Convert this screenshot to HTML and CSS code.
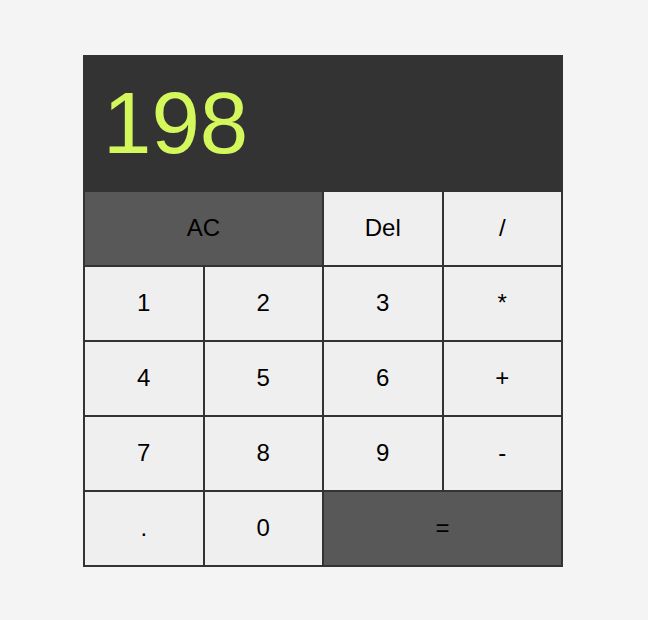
FILE: index.html
```html
<!DOCTYPE html>
<html>
<head>
<meta charset="utf-8">
<link rel="stylesheet" href="styles.css">
</head>
<body>
<div class="page">
  <div class="calc">
    <div class="display">198</div>
    <div class="keys">
      <button class="key dark span2">AC</button>
      <button class="key">Del</button>
      <button class="key">/</button>
      <button class="key">1</button>
      <button class="key">2</button>
      <button class="key">3</button>
      <button class="key">*</button>
      <button class="key">4</button>
      <button class="key">5</button>
      <button class="key">6</button>
      <button class="key">+</button>
      <button class="key">7</button>
      <button class="key">8</button>
      <button class="key">9</button>
      <button class="key">-</button>
      <button class="key">.</button>
      <button class="key">0</button>
      <button class="key dark span2">=</button>
    </div>
  </div>
</div>
</body>
</html>
```
FILE: styles.css
```css
html, body {
  margin: 0;
  padding: 0;
  background: #f4f4f4;
}
.page {
  width: 648px;
  height: 620px;
  display: flex;
  justify-content: center;
  padding-top: 55px;
  box-sizing: border-box;
  padding-right: 2px;
}
.calc {
  width: 480px;
  border: 1px solid #333;
  box-sizing: border-box;
  height: 512px;
  display: flex;
  flex-direction: column;
  background: #333;
}
.display {
  height: 135px;
  box-sizing: border-box;
  background: #333;
  color: #d4f75c;
  font-family: "Liberation Sans", Arial, sans-serif;
  font-size: 87px;
  line-height: 1;
  padding: 23px 0 0 19px;
}
.keys {
  display: grid;
  grid-template-columns: repeat(4, 1fr);
  grid-auto-rows: 75px;
}
.key {
  margin: 0;
  border: 1px solid #333;
  background: #efefef;
  color: #000;
  font-family: "Liberation Sans", Arial, sans-serif;
  font-size: 24px;
  padding: 0 0 2px 0;
}
.key.dark {
  background: #585858;
}
.span2 {
  grid-column: span 2;
}
```
